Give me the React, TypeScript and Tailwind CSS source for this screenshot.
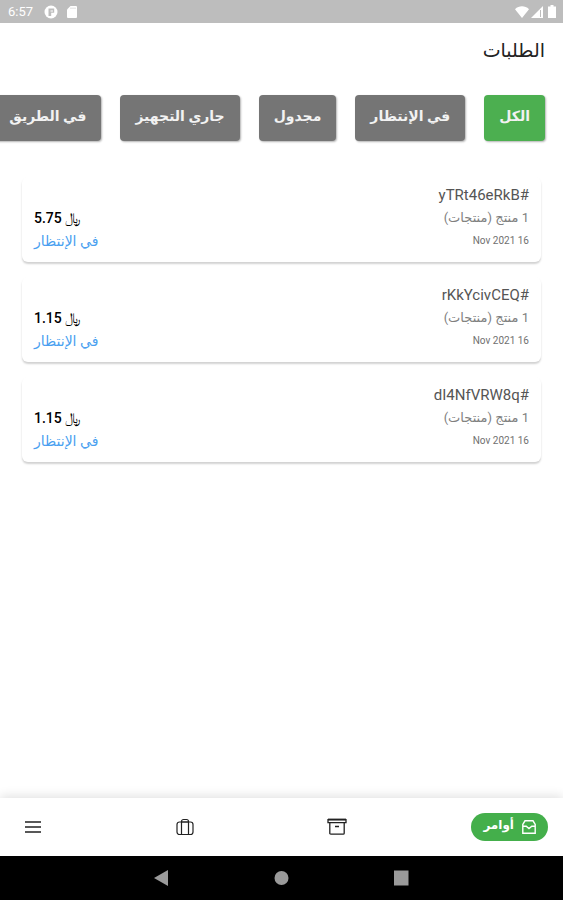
import React, { useState } from 'react';

interface Order {
  id: string;
  items: number;
  date: string;
  price: string;
  status: string;
}

const filters = ['الكل', 'في الإنتظار', 'مجدول', 'جاري التجهيز', 'في الطريق'];

const orders: Order[] = [
  { id: 'yTRt46eRkB', items: 1, date: '16 Nov 2021', price: '5.75', status: 'في الإنتظار' },
  { id: 'rKkYcivCEQ', items: 1, date: '16 Nov 2021', price: '1.15', status: 'في الإنتظار' },
  { id: 'dI4NfVRW8q', items: 1, date: '16 Nov 2021', price: '1.15', status: 'في الإنتظار' },
];

const StatusBar = () => (
  <div dir="ltr" className="flex h-[23px] items-center justify-between bg-[#bdbdbd] pr-1 pl-2 text-white">
    <div className="flex items-center gap-2">
      <span className="w-7 font-[Roboto,sans-serif] text-[13px]">6:57</span>
      <svg width="14" height="14" viewBox="0 0 14 14">
        <circle cx="7" cy="7" r="6.5" fill="currentColor" />
        <path d="M4.5 3.5h5.7v4.2H7.2V11H4.5z" fill="#bdbdbd" />
        <path d="M6.5 5.5h2.5v1h-2.5z" fill="currentColor" />
      </svg>
      <svg width="12" height="14" viewBox="0 0 12 14">
        <path d="M4.5 1H10a1 1 0 0 1 1 1v10a1 1 0 0 1-1 1H2a1 1 0 0 1-1-1V4.5z" fill="currentColor" />
        <path d="M5 2.5v1.5M7 2.5v1.5M9 2.5v1.5" stroke="#d5d5d5" />
      </svg>
    </div>
    <div className="flex items-center gap-[2px]">
      <svg width="14" height="12" viewBox="0 0 14 12">
        <path d="M0 3.2C4 -.6 10-.6 14 3.2L7 12z" fill="currentColor" />
      </svg>
      <svg width="12" height="12" viewBox="0 0 12 12">
        <path d="M0 12 12 0v12z" fill="currentColor" />
        <path d="M9.5 4v7" stroke="#bdbdbd" />
      </svg>
      <svg width="14" height="13" viewBox="0 0 14 13">
        <path d="M5.5 0h3v1.5H11V13H3V1.5h2.5z" fill="currentColor" />
      </svg>
    </div>
  </div>
);

const OrderCard: React.FC<{ order: Order }> = ({ order }) => (
  <li className="flex items-end justify-between rounded-md bg-white px-3 pt-[7px] pb-[10px] shadow-[0_2px_2px_rgba(0,0,0,0.18)]">
    <div>
      <h2 className="text-[15px] leading-[22px] text-[#555]">#{order.id}</h2>
      <p className="text-[13px] leading-6 text-[#808080]">{order.items} منتج (منتجات)</p>
      <p className="text-[10px] leading-[22px] text-[#707070]">{order.date}</p>
    </div>
    <div className="flex flex-col items-end">
      <p className="text-sm leading-6 font-medium text-black">﷼ {order.price}</p>
      <p className="text-sm leading-[22px] text-[#4a9ff0]">{order.status}</p>
    </div>
  </li>
);

const BottomNav = () => (
  <nav className="flex h-[58px] items-center justify-between bg-white px-[15px] text-[#222] shadow-[0_-2px_10px_rgba(0,0,0,0.12)]">
    <button className="flex h-7 items-center gap-2 rounded-full bg-[#44af4b] px-3 text-xs font-bold text-white">
      <svg width="14" height="14" viewBox="0 0 14 14" fill="none" stroke="currentColor" strokeWidth="1.4">
        <path d="M3 .8h8l2.2 3.7v8.7H.8V4.5z" />
        <path d="M1 6.2h3.2L7 8.6l2.8-2.4H13" />
      </svg>
      <span className="pb-1">أوامر</span>
    </button>
    <button aria-label="المنتجات" className="flex h-9 w-9 items-center justify-center">
      <svg width="20" height="18" viewBox="0 0 20 18" fill="none" stroke="currentColor" strokeWidth="1.3">
        <path d="M1 1.7h18v3H1z" />
        <path d="M1 1.5h18" strokeWidth="1.8" />
        <path d="M2.8 4.8v10.4a1 1 0 0 0 1 1h12.4a1 1 0 0 0 1-1V4.8M8 8.5h4" />
      </svg>
    </button>
    <button aria-label="الحقيبة" className="flex h-9 w-9 items-center justify-center">
      <svg width="18" height="18" viewBox="0 0 18 18" fill="none" stroke="currentColor" strokeWidth="1.2">
        <rect x="1" y="4" width="16" height="12.5" rx="2.5" />
        <path d="M5.5 16.5V3.5a2 2 0 0 1 2-2h3a2 2 0 0 1 2 2v13M5.5 4h7" />
      </svg>
    </button>
    <button aria-label="القائمة" className="flex h-9 w-9 items-center justify-center">
      <svg width="16" height="14" viewBox="0 0 16 14" fill="none" stroke="currentColor" strokeWidth="1.3">
        <path d="M0 2h16M0 7h16M0 12h16" />
      </svg>
    </button>
  </nav>
);

const SystemBar = () => (
  <div dir="ltr" className="flex h-11 items-center justify-center gap-[105px] bg-black text-[#9a9a9a]">
    <svg width="15" height="16" viewBox="0 0 15 16">
      <path d="M0 8 14 0v16z" fill="currentColor" />
    </svg>
    <svg width="15" height="16" viewBox="0 0 15 16">
      <circle cx="7.5" cy="8" r="7" fill="currentColor" />
    </svg>
    <svg width="15" height="16" viewBox="0 0 15 16">
      <rect y="0.5" width="14.5" height="15" fill="currentColor" />
    </svg>
  </div>
);

const App: React.FC = () => {
  const [active, setActive] = useState<string>(filters[0]);

  return (
    <div dir="rtl" className="flex min-h-screen flex-col bg-white font-[Roboto,'DejaVu_Sans',sans-serif]">
      <StatusBar />
      <main className="flex-1">
        <h1 className="px-[18px] pt-3 text-[19px] leading-8 text-[#222]">الطلبات</h1>

        {/* Status filters, scroll sideways */}
        <div className="mt-5 flex gap-[19px] overflow-hidden px-[18px] py-2">
          {filters.map(filter => (
            <button
              key={filter}
              onClick={() => setActive(filter)}
              className={`h-[46px] shrink-0 rounded-sm px-[15px] pb-1 text-sm font-bold text-[#f2f2f2] shadow-[1px_1px_2px_rgba(0,0,0,0.3)] ${
                filter === active ? 'bg-[#4caf50]' : 'bg-[#757575]'
              }`}
            >
              {filter}
            </button>
          ))}
        </div>

        {/* Orders */}
        <ul className="mt-7 flex flex-col gap-[15px] px-[22px]">
          {orders.map(order => (
            <OrderCard key={order.id} order={order} />
          ))}
        </ul>
      </main>
      <BottomNav />
      <SystemBar />
    </div>
  );
};

export default App;
